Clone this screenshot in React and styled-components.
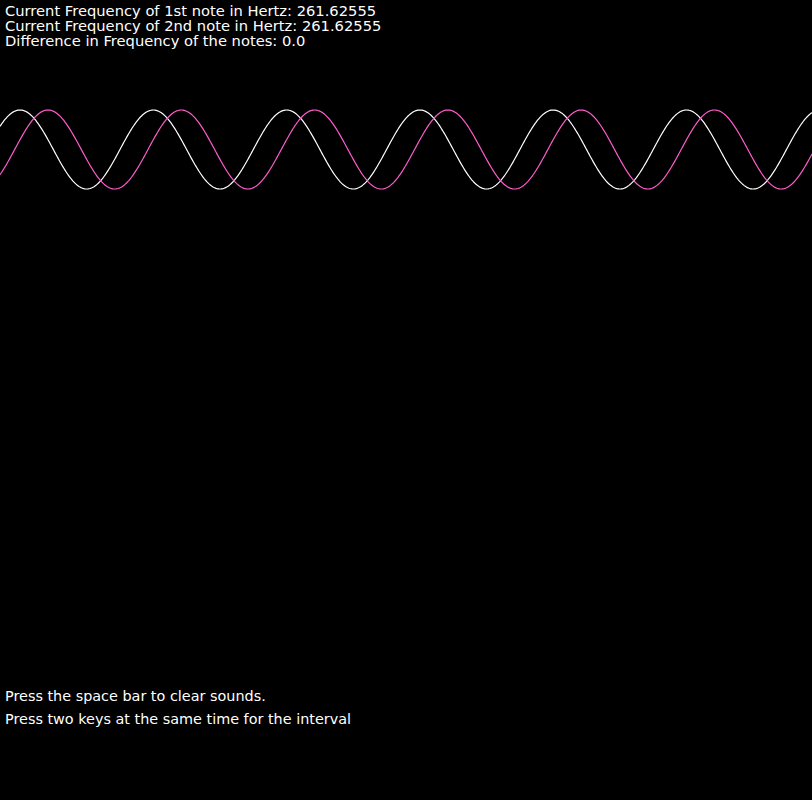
import React from "react";
import styled, { createGlobalStyle } from "styled-components";

const Global = createGlobalStyle`
  html, body {
    margin: 0;
    padding: 0;
    background: #000;
  }
`;

const Screen = styled.div`
  width: 812px;
  height: 800px;
  background: #000;
  color: #fff;
  font-family: "DejaVu Sans", "Liberation Sans", sans-serif;
  display: flex;
  flex-direction: column;
  overflow: hidden;
`;

const Readout = styled.div`
  padding: 3px 0 0 5px;
  font-size: 14.7px;
  line-height: 15px;
`;

const Waves = styled.svg`
  display: block;
  margin-top: 52px;
  flex: none;
`;

const Hints = styled.div`
  margin-top: auto;
  padding: 0 0 69px 5px;
  font-size: 14.4px;
  line-height: 23px;
`;

// svg box starts at y=100, so the wave centre sits at 49.5 inside it
const wavePath = (peak, period = 133.3, amp = 39.5, mid = 49.5) => {
  let d = "";
  for (let x = 0; x <= 812; x += 1) {
    const y = mid - amp * Math.cos((2 * Math.PI * (x - peak)) / period);
    d += (x === 0 ? "M" : "L") + x + " " + y.toFixed(2);
  }
  return d;
};

const notes = [
  { name: "Current Frequency of 1st note in Hertz", value: "261.62555" },
  { name: "Current Frequency of 2nd note in Hertz", value: "261.62555" },
  { name: "Difference in Frequency of the notes", value: "0.0" },
];

export default function App() {
  return (
    <>
      <Global />
      <Screen>
        <Readout>
          {notes.map((n) => (
            <div key={n.name}>
              {n.name}: {n.value}
            </div>
          ))}
        </Readout>
        <Waves width="812" height="100" viewBox="0 0 812 100">
          <path d={wavePath(20)} fill="none" stroke="#ffffff" strokeWidth="1.2" />
          <path d={wavePath(48)} fill="none" stroke="#ff5ccc" strokeWidth="1.2" />
        </Waves>
        <Hints>
          <div>Press the space bar to clear sounds.</div>
          <div>Press two keys at the same time for the interval</div>
        </Hints>
      </Screen>
    </>
  );
}
